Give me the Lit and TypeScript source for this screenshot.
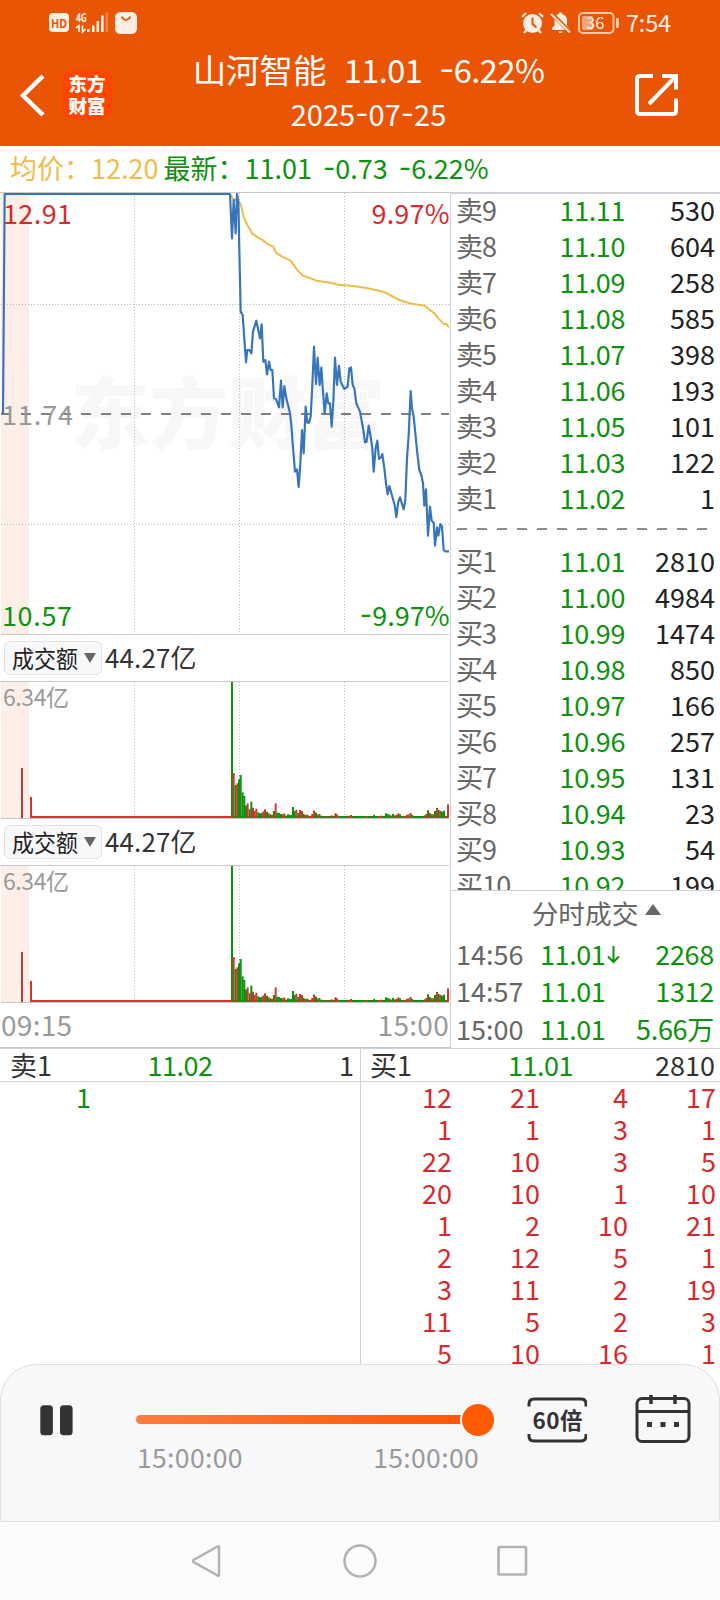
import { LitElement, html, svg, css } from "lit";
import { customElement, property } from "lit/decorators.js";

type Level = [string, string, string];

const SELLS: Level[] = [
  ["卖9", "11.11", "530"], ["卖8", "11.10", "604"], ["卖7", "11.09", "258"],
  ["卖6", "11.08", "585"], ["卖5", "11.07", "398"], ["卖4", "11.06", "193"],
  ["卖3", "11.05", "101"], ["卖2", "11.03", "122"], ["卖1", "11.02", "1"],
];
const BUYS: Level[] = [
  ["买1", "11.01", "2810"], ["买2", "11.00", "4984"], ["买3", "10.99", "1474"],
  ["买4", "10.98", "850"], ["买5", "10.97", "166"], ["买6", "10.96", "257"],
  ["买7", "10.95", "131"], ["买8", "10.94", "23"], ["买9", "10.93", "54"],
  ["买10", "10.92", "199"],
];
const TRADES: [string, string, boolean, string][] = [
  ["14:56", "11.01", true, "2268"],
  ["14:57", "11.01", false, "1312"],
  ["15:00", "11.01", false, "5.66万"],
];
const QUEUE = [
  [12, 21, 4, 17], [1, 1, 3, 1], [22, 10, 3, 5], [20, 10, 1, 10], [1, 2, 10, 21],
  [2, 12, 5, 1], [3, 11, 2, 19], [11, 5, 2, 3], [5, 10, 16, 1],
];

// Series are kept on a grid three times finer than the chart's pixels.
const PRICE = `-651,687 -646,27 30,27 36,160 41,45 47,145 51,27 55,50 62,380 68,390 78,532 82,495 88,495 94,505
99,440 109,407 120,460 125,418 130,530 136,525 141,568 147,530 152,555 157,555 162,640 168,642 177,667
183,587 188,667 193,603 199,640 204,660 210,685 214,720 218,775 225,860 231,853 236,906 241,835 246,735
251,805 257,665 262,713 267,713 272,695 277,600 282,485 288,597 293,518 299,600 304,548 309,620 314,685
320,625 325,655 330,655 335,725 340,650 345,518 351,600 357,542 362,590 373,612 383,605 388,550 393,547
398,600 403,610 409,655 420,680 430,735 435,772 440,770 446,722 452,755 457,790 461,860 467,790 472,767
477,822 483,817 487,807 493,850 498,895 503,928 508,903 514,925 524,960 529,996 535,950 540,937 551,973
556,945 561,820 566,750 569,685 572,618 576,670 581,695 587,755 592,805 598,855 604,870 609,895 613,962
618,913 624,1052 630,965 635,1007 641,1013 645,1082 651,1027 655,1052 661,1017 666,1025 671,1095 675,1099 687,1099`;
const AVERAGE = `30,27 40,42 55,48 62,58 72,98 82,120 96,145 110,155 125,163 145,178 160,185 168,203 185,214
212,227 228,250 247,271 262,276 290,287 335,294 355,299 400,303 440,309 490,320 515,333 540,346 575,356
615,362 628,374 642,384 655,400 670,416 680,418 687,427`;

// [offset, height, up] for each minute of turnover; quiet minutes are left to the base strip.
const BARS: [number, number, number][] = [
  [33, 408, 0], [38, 135, 1], [44, 99, 0], [49, 104, 1], [54, 116, 0], [59, 129, 0], [65, 77, 0], [70, 66, 0],
  [75, 37, 0], [80, 44, 1], [86, 26, 1], [91, 49, 0], [96, 31, 1], [101, 21, 1], [106, 28, 1], [112, 17, 0],
  [117, 14, 0], [122, 15, 0], [127, 20, 1], [132, 26, 1], [138, 19, 0], [143, 14, 1], [148, 11, 0], [153, 10, 1],
  [159, 21, 0], [164, 44, 1], [169, 16, 0], [174, 15, 0], [180, 12, 0], [185, 11, 1], [190, 14, 1], [195, 7, 0],
  [201, 11, 0], [206, 9, 0], [211, 9, 0], [216, 33, 0], [221, 21, 0], [226, 25, 1], [232, 15, 0], [237, 24, 1],
  [243, 21, 1], [248, 13, 0], [253, 9, 1], [258, 10, 0], [263, 7, 1], [269, 7, 1], [274, 12, 1], [279, 22, 1],
  [285, 16, 0], [290, 10, 0], [295, 12, 1], [300, 7, 0], [316, 6, 1], [332, 8, 1], [343, 14, 1], [348, 11, 1],
  [364, 6, 0], [380, 7, 1], [390, 9, 1], [438, 6, 1], [459, 9, 0], [474, 6, 1], [480, 7, 1], [495, 14, 0],
  [500, 12, 0], [506, 10, 0], [511, 7, 1], [516, 12, 0], [521, 8, 0], [527, 10, 1], [532, 14, 1], [537, 11, 0],
  [548, 6, 1], [558, 9, 1], [563, 11, 1], [569, 15, 1], [574, 9, 0], [611, 8, 1], [616, 12, 1], [621, 23, 0],
  [627, 15, 1], [632, 11, 0], [637, 11, 1], [642, 21, 0], [648, 30, 1], [653, 24, 0], [658, 22, 1], [663, 19, 0],
  [669, 22, 0], [674, 6, 1], [681, 41, 1],
];

const FONT = css`"Noto Sans CJK SC", "Noto Sans", sans-serif`;

@customElement("price-chart")
class PriceChart extends LitElement {
  static styles = css`
    :host, svg { display: block; }
    text { font: 400 27px ${FONT}; }
    .mark { font-weight: 900; font-size: 78.5px; fill: #f7f7f7; }
    .grid { stroke: #bdbdbd; stroke-dasharray: 1 2; }
    .up { fill: #d62a2c; } .down { fill: #0c920c; } .flat { fill: #999; }
    .minus { font-family: Inter, sans-serif; }
  `;
  render() {
    return html`<svg width="450" height="443" viewBox="0 0 450 443">
      <rect x="1" y="1" width="28" height="442" fill="#fdeee8"/>
      <text class="mark" x="71" y="251">东方财富</text>
      <path d="M0 .5H450M1 442.5H449" stroke="#c8c8c8"/>
      <path class="grid" d="M1 112.5H449M1 332.5H449M134.5 1V442M239.5 1V442M344.5 1V442"/>
      <path d="M1 222H449" stroke="#808080" stroke-width="2" stroke-dasharray="10 10"/>
      <g transform="translate(220 -7) scale(.33333)" fill="none" stroke-linejoin="round">
        <polyline points=${AVERAGE} stroke="#edbc49" stroke-width="6"/>
        <polyline points=${PRICE} stroke="#3775ba" stroke-width="6.5"/>
      </g>
      <text class="up" x="3" y="32" textLength="69">12.91</text>
      <text class="up" x="449.500" y="32" text-anchor="end" textLength="78">9.97%</text>
      <text class="flat" x="2" y="233" textLength="71">11.74</text>
      <text class="down" x="2" y="434" textLength="70">10.57</text>
      <text class="down" x="449.500" y="434" text-anchor="end"><tspan class="minus" dy="-2">-</tspan><tspan dy="2">9.97%</tspan></text>
    </svg>`;
  }
}

@customElement("turnover-chart")
class TurnoverChart extends LitElement {
  static styles = css`
    :host { display: block; font: 400 26px ${FONT}; color: #333; }
    .head { display: flex; align-items: center; height: 46px; padding-left: 4px; gap: 3px; }
    .pick { box-sizing: border-box; width: 98px; height: 34px; border: 1px solid #e1e2e6; border-radius: 6px;
      background: #f7f8fa; display: flex; align-items: center; padding-left: 7px; gap: 6px; line-height: 32px; color: #222; }
    .name { font-size: 22px; width: 66px; transform: translateY(-1.5px) scaleY(1.1); }
    .total { line-height: 40px; margin-top: -3px; letter-spacing: .1px; }
    svg { display: block; }
    text { font: 400 23px ${FONT}; fill: #999; }
  `;
  render() {
    return html`<div class="head">
        <div class="pick"><span class="name">成交额</span>
          <svg width="12" height="10"><path d="M0 0H12L6 10Z" fill="#666"/></svg></div>
        <span class="total">44.27亿</span>
      </div>
      <svg width="450" height="138" viewBox="0 0 450 138">
        <rect x="1" y="1" width="28" height="137" fill="#fdeee8"/>
        <path d="M0 .5H449M1 137.5H449" stroke="#c8c8c8"/>
        <path d="M134.5 1V137M239.5 1V137M344.5 1V137" stroke="#bdbdbd" stroke-dasharray="1 2"/>
        <rect x="21" y="87" width="2" height="50" fill="#a8403c"/>
        <rect x="30" y="116" width="2" height="21" fill="#db3132"/>
        <rect x="31" y="135" width="200" height="2" fill="#db3132"/>
        <rect x="231" y="135" width="216" height="2" fill="#168a12"/>
        ${BARS.map(([x, h, up]) => svg`<rect x=${220 + x / 3} y=${137 - h / 3} width="2" height=${h / 3}
          fill=${up ? "#cb3a30" : "#0c920c"}/>`)}
        <text x="3" y="25" textLength="66">6.34亿</text>
      </svg>`;
  }
}

@customElement("order-book")
class OrderBook extends LitElement {
  static styles = css`
    :host { display: grid; grid-template-rows: 697px 1fr; box-sizing: border-box; font: 400 27px ${FONT};
      border-left: 1px solid #cfd2d8; border-top: 2px solid #cfd2d8; color: #222; }
    .levels { overflow: hidden; border-bottom: 1px solid #cfcfcf; }
    .shift { margin-top: -2px; }
    .row { display: grid; grid-template-columns: 60px 109px 1fr; padding: 0 5px 0 5px; line-height: 36px; height: 36px; }
    .tag { color: #666; letter-spacing: -.9px; white-space: nowrap; }
    .px { color: #0c920c; text-align: right; letter-spacing: -.4px; }
    .qty { text-align: right; }
    .gap { height: 27px; display: flex; align-items: center; padding-left: 6px; }
    .gap svg { margin-top: -2px; }
    .more { display: flex; justify-content: center; align-items: center; gap: 7px; height: 44px; color: #666;
      padding-left: 22px; font-size: 26.7px; line-height: 40px; }
    .more svg { margin-top: -7px; }
    .trade { display: grid; grid-template-columns: 84px 64px 20px 1fr; padding: 0 6px 0 5px; height: 37.4px; line-height: 38px; color: #0c920c; }
    .time { color: #666; }
    .trade .px { text-align: left; }
    .trade .qty { letter-spacing: -.3px; }
    .arrow { padding: 11px 0 0 3px; line-height: 0; }
  `;
  row([tag, px, qty]: Level) {
    return html`<div class="row"><span class="tag">${tag}</span><span class="px">${px}</span><span class="qty">${qty}</span></div>`;
  }
  render() {
    return html`<div class="levels"><div class="shift">
        ${SELLS.map(this.row)}
        <div class="gap"><svg width="252" height="2"><path d="M0 1H252" stroke="#8c8c8c" stroke-width="2" stroke-dasharray="10 10"/></svg></div>
        ${BUYS.map(this.row)}
      </div></div>
      <div>
        <div class="more">分时成交<svg width="16" height="11"><path d="M8 0L16 11H0Z" fill="#666"/></svg></div>
        ${TRADES.map(([t, p, down, q]) => html`<div class="trade"><span class="time">${t}</span><span class="px">${p}</span>
          <span class="arrow">${down ? html`<svg width="13" height="18" viewBox="0 0 13 18" fill="none" stroke="#0c920c" stroke-width="2"><path d="M6.5 0V16M1 10.5L6.5 16L12 10.5"/></svg>` : ""}</span>
          <span class="qty">${q}</span></div>`)}
      </div>`;
  }
}

@customElement("order-queue")
class OrderQueue extends LitElement {
  @property() side = "";
  @property() price = "";
  @property() total = "";
  @property({ attribute: false }) rows: number[][] = [];
  @property({ type: Boolean, reflect: true }) sell = false;
  static styles = css`
    :host { display: block; box-sizing: border-box; width: 360px; font: 400 27px ${FONT}; color: #333; }
    :host(:not([sell])) { border-left: 1px solid #cfd2d8; }
    .head { display: grid; grid-template-columns: 1fr 72px 1fr; height: 32px; line-height: 31px;
      border-bottom: 1px solid #cfd2d8; padding: 0 5px 0 9px; }
    .price { color: #0c920c; letter-spacing: -.5px; margin-left: -4px; text-align: center; }
    .total { text-align: right; }
    .row { display: grid; grid-template-columns: repeat(4, 88px); height: 32px; line-height: 29px;
      text-align: right; color: #d62a2c; padding-left: 3px; }
    :host([sell]) .row { color: #0c920c; }
    :host([sell]) .head { padding-right: 6px; padding-left: 10px; }
  `;
  render() {
    return html`<div class="head"><span>${this.side}</span><span class="price">${this.price}</span><span class="total">${this.total}</span></div>
      ${this.rows.map((r) => html`<div class="row">${r.map((n) => html`<span>${n}</span>`)}</div>`)}`;
  }
}

@customElement("replay-player")
class ReplayPlayer extends LitElement {
  static styles = css`
    :host { box-sizing: border-box; display: grid; grid-template-columns: 135px 359px 32px 60px 48px 56px; align-items: start;
      height: 158px; border: 1px solid #dfdfdf; border-radius: 36px 36px 0 0; background: #f8f8fa;
      font: 400 26.5px ${FONT}; color: #999; }
    svg { display: block; }
    .pause { margin: 40px 0 0 39px; }
    .slider { margin-top: 37px; }
    .times { display: flex; justify-content: space-between; padding: 0 16px 0 1px; line-height: 36px; margin-top: 1px; letter-spacing: .35px; }
    .speed { margin-top: 31px; grid-column: 4; }
    .cal { margin-top: 29px; grid-column: 6; }
    text { font: 700 22.5px "Noto Sans CJK SC", sans-serif; fill: #333; }
  `;
  render() {
    return html`
      <svg class="pause" width="34" height="31"><rect x=".3" y=".3" width="12.6" height="30" rx="3.5" fill="#333"/><rect x="20" y=".3" width="12.6" height="30" rx="3.5" fill="#333"/></svg>
      <div>
        <svg class="slider" width="359" height="36" viewBox="0 0 359 36">
          <defs><linearGradient id="track"><stop stop-color="#ff7a3d"/><stop offset="1" stop-color="#ff5500"/></linearGradient></defs>
          <rect y="13" width="345" height="9" rx="4.5" fill="url(#track)"/>
          <circle cx="342" cy="18" r="18" fill="#fffaf5"/><circle cx="342" cy="18" r="16" fill="#ff5a00"/>
        </svg>
        <div class="times"><span>15:00:00</span><span>15:00:00</span></div>
      </div>
      <svg class="speed" width="60" height="48" viewBox="0 0 60 48">
        <path d="M2 10.5V8Q2 3 7 3H54Q59 3 59 8V10.5M2 38V40Q2 45 7 45H54Q59 45 59 40V38" fill="none" stroke="#333" stroke-width="3"/>
        <text x="5.500" y="33" font-size="23" textLength="50">60倍</text>
      </svg>
      <svg class="cal" width="56" height="50" viewBox="0 0 56 50" fill="none" stroke="#333" stroke-width="3">
        <rect x="2" y="4.5" width="52" height="43" rx="5"/><path d="M2 17.5H54"/><path d="M16 1V10M40 1V10" stroke-width="3.5"/>
        <path d="M12 30.5H17M25.5 30.5H30.5M39 30.5H44" stroke-width="5"/>
      </svg>`;
  }
}

@customElement("app-root")
class AppRoot extends LitElement {
  static styles = css`
    :host { display: block; width: 720px; height: 1600px; overflow: hidden; background: #fff; font: 400 27px ${FONT}; }
    svg { display: block; }
    header { height: 146px; background: #e95504; color: #fff; }
    .status { display: flex; align-items: center; height: 46px; padding: 0 48px 0 49px; color: #fdeee4; }
    .clock { margin: 0 4px 0 auto; }
    .bar { display: grid; grid-template-columns: 20px 42px 52px 1fr 44px 41px; height: 100px; }
    .back { grid-column: 2; margin-top: 28px; }
    .logo { box-sizing: border-box; width: 50px; height: 50px; border-radius: 10px; background: #ff4600; margin-top: 24px;
      font-size: 18.5px; font-weight: 900; line-height: 22px; text-align: center; padding-top: 2px; }
    .title { display: flex; flex-direction: column; align-items: center; white-space: nowrap; padding-right: 12px; }
    .name { font-size: 33.5px; line-height: 46px; display: flex; gap: 17px; }
    .name .n { font-size: 32.5px; letter-spacing: -.5px; }
    .minus { font-family: Inter, sans-serif; line-height: 0; vertical-align: 2px; }
    .date { font-size: 29px; line-height: 42px; }
    .share { margin-top: 27px; }
    .info { display: flex; height: 46px; line-height: 43px; padding-left: 10px; color: #0c920c; white-space: nowrap; }
    .avg { color: #efbb4c; margin-right: 5px; }
    .chg { margin-left: 11px; }
    .main { display: grid; grid-template-columns: 450px 270px; height: 856px; }
    .axis { display: flex; justify-content: space-between; height: 44px; line-height: 43px; color: #999; padding: 0 1px 0 1px;
      border-bottom: 1px solid #c8c8c8; font-size: 28px; letter-spacing: .3px; }
    .queues { display: flex; height: 315px; border-top: 1px solid #cfd2d8; overflow: hidden; }
    nav { display: grid; grid-template-columns: repeat(3, 34px); column-gap: 119px; justify-content: center; align-items: center;
      height: 78px; background: #fcfcfc; }
  `;
  render() {
    const minus = html`<span class="minus">-</span>`;
    return html`
      <header>
        <div class="status">
          <svg width="90" height="24" viewBox="0 0 90 24" fill="#fdeee4">
            <rect y="2" width="20" height="19" rx="4"/>
            <text x="2" y="16.5" font-size="12.5" font-weight="700" font-family="Noto Sans" fill="#e95504" textLength="16" lengthAdjust="spacingAndGlyphs">HD</text>
            <text x="27" y="10.5" font-size="11.5" font-weight="700" font-family="Noto Sans" textLength="11" lengthAdjust="spacingAndGlyphs">4G</text>
            <path d="M27 17L30 14.500V21M33.500 14.500V21L36.500 18" fill="none" stroke="#fdeee4" stroke-width="1.700"/>
            <path d="M38 18h2.600v3H38zM43 14.500h2.600V21H43zM47.500 10h2.600v11h-2.600zM52 4.500h2.600V21H52z"/>
            <path d="M56.500 1.500h2.600V21h-2.600z" opacity=".3"/>
            <rect x="66" y="1" width="22" height="22" rx="5.500"/>
            <path d="M72.500 5.500Q77 12.500 81.500 5.500" fill="none" stroke="#e95504" stroke-width="1.500"/>
          </svg>
          <svg class="clock" width="99" height="24" viewBox="0 0 99 24" fill="#fdeee4">
            <circle cx="11.500" cy="12.500" r="9.500"/><path d="M1 6L5 2M22 6L18 2M3 22L5.500 19M20 22L17.500 19" stroke="#fdeee4" stroke-width="2.200"/>
            <path d="M11.500 6.500V13L15.500 16.500" fill="none" stroke="#e95504" stroke-width="2"/>
            <path d="M31 19V17L33.500 14.500V9Q34 3.500 38 3V1.500H41V3Q45.500 4 46 9V14.500L48.500 17.500V19ZM37 20.500H42Q39.500 23.500 37 20.500Z"/>
            <path d="M29.500 1.500L49 21" stroke="#e95504" stroke-width="4"/><path d="M30 3L49 21.500" stroke="#fdeee4" stroke-width="2"/>
            <rect x="58" y="2" width="34.500" height="20" rx="4" fill="none" stroke="#fbc9a8" stroke-width="2"/>
            <rect x="61" y="5" width="11" height="14" rx="1.500" fill="#f5a477"/><rect x="95" y="7" width="3" height="10" rx="1" fill="#fbc9a8"/>
            <text x="65" y="18" font-size="16.500" font-family="Noto Sans CJK SC">36</text>
          </svg>
          <svg width="48" height="24"><text x="2" y="20.500" font-size="23.500" font-family="Noto Sans CJK SC" fill="#fdeee4" textLength="45">7:54</text></svg>
        </div>
        <div class="bar">
          <svg class="back" width="26" height="44" viewBox="0 0 26 44"><path d="M23 2L3 21.500L23 41" fill="none" stroke="#fff" stroke-width="4.500"/></svg>
          <div class="logo">东方<br>财富</div>
          <div class="title">
            <div class="name"><span>山河智能</span><span class="n">11.01</span><span class="n">${minus}6.22%</span></div>
            <div class="date">2025${minus}07${minus}25</div>
          </div>
          <svg class="share" width="44" height="44" viewBox="0 0 44 44" fill="none" stroke="#fff" stroke-width="4">
            <path d="M18 3H5Q2 3 2 6V38Q2 41 5 41H38Q41 41 41 38V25.500M27 3H41V16.500M40 4L14 31"/>
          </svg>
        </div>
      </header>
      <div class="info"><span class="avg">均价：12.20</span><span>最新：11.01</span><span class="chg">${minus}0.73</span><span class="chg">${minus}6.22%</span></div>
      <div class="main">
        <div>
          <price-chart></price-chart>
          <turnover-chart></turnover-chart>
          <turnover-chart></turnover-chart>
          <div class="axis"><span>09:15</span><span>15:00</span></div>
        </div>
        <order-book></order-book>
      </div>
      <div class="queues">
        <order-queue sell side="卖1" price="11.02" total="1" .rows=${[[1]]}></order-queue>
        <order-queue side="买1" price="11.01" total="2810" .rows=${QUEUE}></order-queue>
      </div>
      <replay-player></replay-player>
      <nav>
        <svg width="34" height="34" viewBox="0 0 34 34"><path d="M29 3.500V31Q29 32.500 27.500 31.500L3.500 18Q2.500 17 3.500 16L27.500 2.500Q29 1.500 29 3.500Z" fill="none" stroke="#b2b2b2" stroke-width="2.500"/></svg>
        <svg width="34" height="34" viewBox="0 0 34 34"><circle cx="17" cy="17" r="15.500" fill="none" stroke="#b2b2b2" stroke-width="2.500"/></svg>
        <svg width="34" height="34" viewBox="0 0 34 34"><rect x="2.500" y="3" width="27.500" height="27.500" rx="1.500" fill="none" stroke="#b2b2b2" stroke-width="2.700"/></svg>
      </nav>`;
  }
}
